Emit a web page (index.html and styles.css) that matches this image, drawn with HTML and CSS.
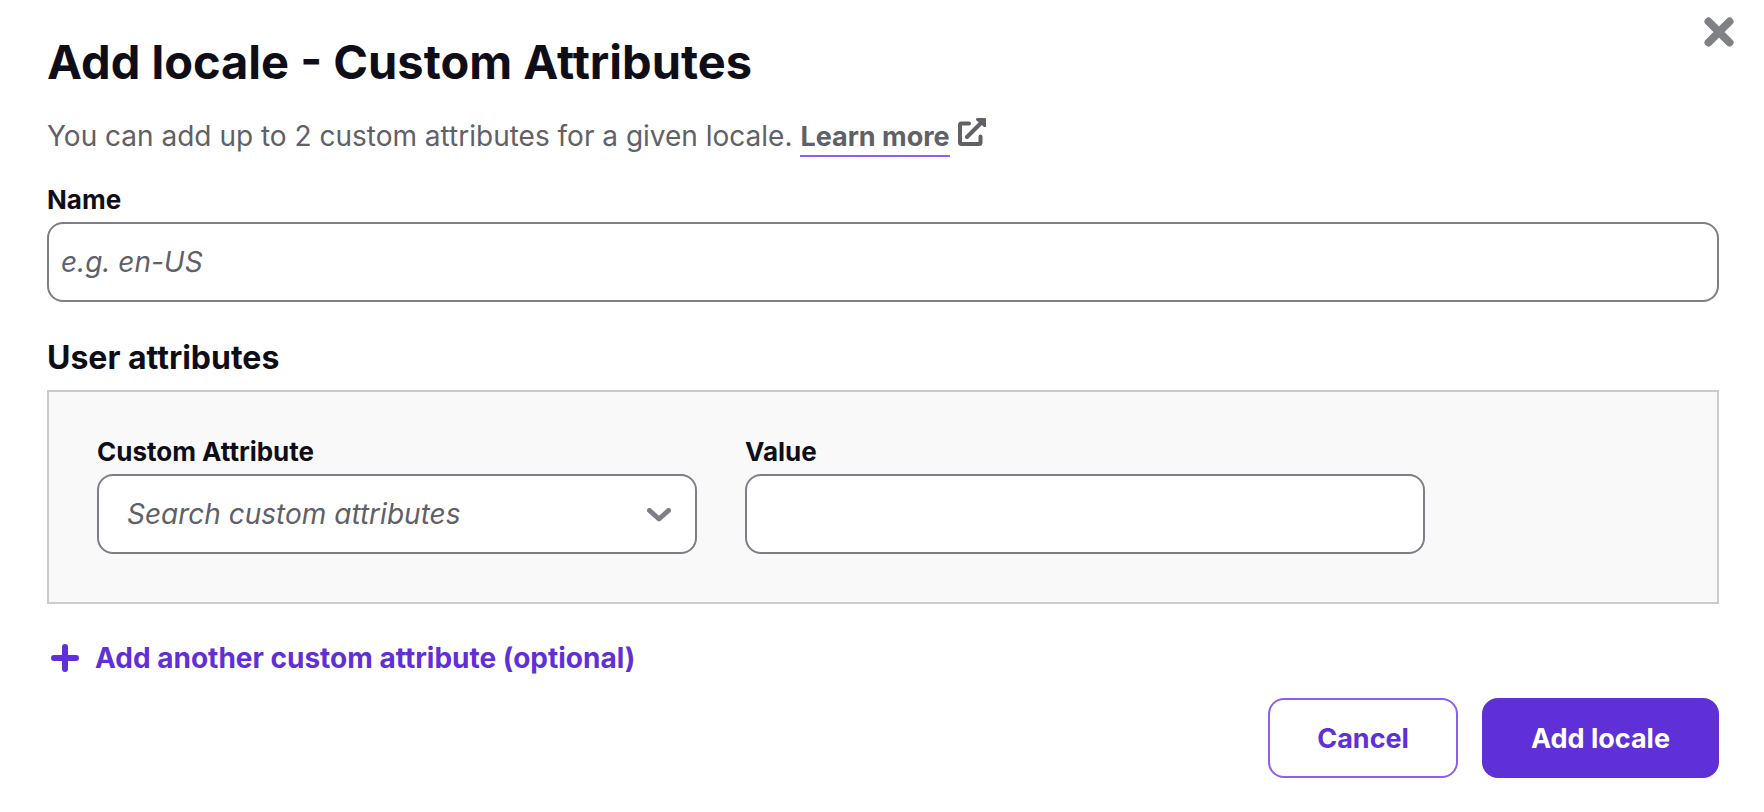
FILE: index.html
```html
<!DOCTYPE html>
<html lang="en">
    <head>
        <meta charset="UTF-8" />
        <meta name="viewport" content="width=device-width, initial-scale=1.0" />
        <title>Add locale - Custom Attributes</title>
        <link rel="stylesheet" href="styles.css">
    </head>
    <body>
        <main class="modal">
            <button class="close" type="button" aria-label="Close">
                <svg width="30" height="30" viewBox="0 0 30 30">
                    <path d="M4.5 4.5 L25.5 25.5 M25.5 4.5 L4.5 25.5" />
                </svg>
            </button>
            <h1>Add locale - Custom Attributes</h1>
            <p class="intro">
                You can add up to 2 custom attributes for a given locale.
                <a href="#">Learn more</a>
                <svg class="external" width="28" height="28" viewBox="0 0 28 28">
                    <path d="M11 5.5 H3.5 Q2 5.5 2 7 V24.5 Q2 26 3.5 26 H21 Q22.5 26 22.5 24.5 V18.5" />
                    <path d="M9 19 L23 5" />
                    <path class="head" d="M19 0 H27 Q28 0 28 1 V9 H26 L18 2 Q18 0 19 0 Z" />
                </svg>
            </p>
            <form>
                <div class="field">
                    <label for="name">Name</label>
                    <input id="name" type="text" placeholder="e.g. en-US" />
                </div>
                <h2>User attributes</h2>
                <div class="attributes">
                    <div class="field">
                        <label for="attribute">Custom Attribute</label>
                        <div class="select">
                            <select id="attribute">
                                <option>Search custom attributes</option>
                            </select>
                            <svg width="24" height="14" viewBox="0 0 24 14">
                                <path d="M2.5 2.5 L12 11 L21.5 2.5" />
                            </svg>
                        </div>
                    </div>
                    <div class="field">
                        <label for="value">Value</label>
                        <input id="value" type="text" />
                    </div>
                </div>
                <button class="add" type="button">
                    <svg width="28" height="28" viewBox="0 0 28 28">
                        <path d="M14 3 V25 M3 14 H25" />
                    </svg>
                    Add another custom attribute (optional)
                </button>
                <div class="actions">
                    <button class="btn" type="button">Cancel</button>
                    <button class="btn primary" type="submit">Add locale</button>
                </div>
            </form>
        </main>
    </body>
</html>
```

FILE: styles.css
```css
* {
    box-sizing: border-box;
}
body {
    margin: 0;
    background-color: #fff;
    color: #0f0e18;
    font-family: Inter, "Liberation Sans", sans-serif;
    font-size: 28px;
}
.modal {
    position: relative;
    padding: 32px 45px 34px 47px;
}
.close {
    position: absolute;
    top: 17px;
    right: 30px;
    padding: 0;
    border: none;
    background: none;
    line-height: 0;
    cursor: pointer;
}
svg {
    fill: none;
    stroke-linecap: round;
    stroke-linejoin: round;
}
.close svg {
    stroke: #808087;
    stroke-width: 8;
}
h1 {
    margin: 0;
    font-size: 47px;
    font-weight: bold;
    line-height: 60px;
}
.intro {
    margin: 24px 0 23px;
    color: #606067;
    line-height: 40px;
}
.intro a {
    padding-bottom: 2px;
    border-bottom: 2px solid #8c5ff0;
    color: inherit;
    font-size: 27px;
    font-weight: bold;
    text-decoration: none;
}
.external {
    stroke: #606067;
    stroke-width: 4;
}
.external .head {
    fill: #606067;
    stroke: none;
}
label {
    display: block;
    margin-bottom: 2px;
    font-size: 26px;
    font-weight: bold;
    line-height: 40px;
}
input,
select {
    display: block;
    width: 100%;
    height: 80px;
    padding: 0 12px;
    border: 2px solid #7f7e86;
    border-radius: 16px;
    background-color: #fff;
    color: #606067;
    font: inherit;
}
select {
    appearance: none;
    padding: 0 28px;
    font-style: italic;
}
input::placeholder {
    color: #606067;
    font-style: italic;
}
.select {
    position: relative;
}
.select svg {
    position: absolute;
    top: 34px;
    right: 26px;
    stroke: #7f7e86;
    stroke-width: 5;
    pointer-events: none;
}
h2 {
    margin: 36px 0 12px;
    font-size: 32px;
    font-weight: bold;
    line-height: 40px;
}
.attributes {
    display: grid;
    grid-template-columns: 150fr 170fr 49fr;
    column-gap: 48px;
    padding: 40px 48px 48px;
    border: 2px solid #cbcbcd;
    background-color: #f9f9f9;
}
.add {
    display: flex;
    align-items: center;
    gap: 16px;
    margin: 34px 0 20px;
    padding: 0 4px;
    border: none;
    background: none;
    color: #5f30d8;
    font: inherit;
    font-weight: bold;
    line-height: 40px;
    cursor: pointer;
}
.add svg {
    stroke: #5f30d8;
    stroke-width: 6;
}
.actions {
    display: flex;
    justify-content: flex-end;
    gap: 24px;
}
.btn {
    height: 80px;
    padding: 0 47px;
    border: 2px solid #8c5ff0;
    border-radius: 16px;
    background-color: #fff;
    color: #5f30d8;
    font: inherit;
    font-size: 27px;
    font-weight: bold;
    cursor: pointer;
}
.btn.primary {
    border-color: #5f30d8;
    background-color: #5f30d8;
    color: #fff;
}
```
